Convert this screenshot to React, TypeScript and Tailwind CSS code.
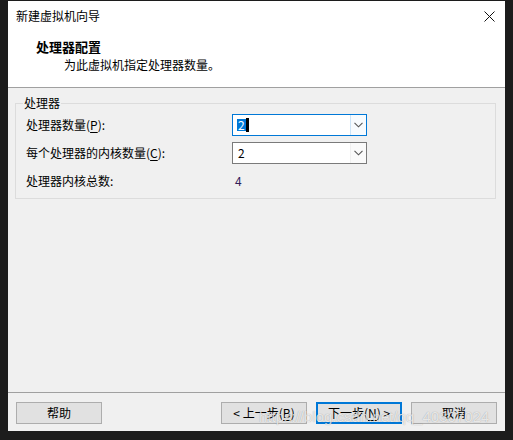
const font = "font-['Microsoft_YaHei','Noto_Sans_CJK_SC',sans-serif]";

const Accel = ({ ch }: { ch: string }) => (
  <>
    (<span className="underline underline-offset-2">{ch}</span>)
  </>
);

const Combo = ({ value, focused }: { value: string; focused?: boolean }) => (
  <div
    className={
      focused
        ? 'flex h-[22px] w-[135px] border border-[#0078d7] bg-white'
        : 'flex h-[22px] w-[135px] border border-[#7a7a7a] bg-white'
    }
  >
    <div className="flex flex-1 items-center pl-[4px] text-[12px] leading-none text-black">
      {focused ? (
        <>
          <span className="bg-[#0078d7] px-[1px] text-white">{value}</span>
          <span className="h-[14px] w-[3px] bg-black" />
        </>
      ) : (
        <span className="px-[1px]">{value}</span>
      )}
    </div>
    <div
      className={
        focused
          ? 'flex w-[16px] items-center justify-center border-l border-[#cce4f7] bg-[#f7fbfe]'
          : 'flex w-[16px] items-center justify-center border-l border-[#f0f0f0] bg-[#fafafa]'
      }
    >
      <svg width="9" height="6" viewBox="0 0 9 6" fill="none">
        <path d="M0.5 0.8 L4.5 4.8 L8.5 0.8" stroke="#555" strokeWidth="1.1" />
      </svg>
    </div>
  </div>
);

const WizButton = ({ children, primary }: { children: React.ReactNode; primary?: boolean }) => (
  <button
    type="button"
    className={
      primary
        ? 'flex h-[22px] w-[86px] items-center justify-center border-2 border-[#0078d7] bg-[#e1e1e1] text-[12px] text-black'
        : 'flex h-[22px] w-[86px] items-center justify-center border border-[#adadad] bg-[#e1e1e1] text-[12px] text-black'
    }
  >
    {children}
  </button>
);

export default function App() {
  return (
    <div className={`relative h-[440px] w-[513px] overflow-hidden bg-[#1c1c1c] pl-[8px] pt-[1px] ${font}`}>
      <div className="flex h-[430px] w-[497px] flex-col bg-[#f0f0f0]">
        {/* title bar */}
        <div className="flex h-[30px] items-center justify-between bg-white pl-[8px] pr-[10px]">
          <span className="text-[12px] text-black">新建虚拟机向导</span>
          <svg width="11" height="11" viewBox="0 0 11 11">
            <path d="M0.5 0.5 L10.5 10.5 M10.5 0.5 L0.5 10.5" stroke="#111" strokeWidth="1" />
          </svg>
        </div>

        {/* header */}
        <div className="flex h-[56px] flex-col bg-white pl-[28px] pt-[6px]">
          <span className="text-[13px] font-bold leading-[20px] text-black">处理器配置</span>
          <span className="pl-[28px] text-[12px] leading-[16px] text-black">为此虚拟机指定处理器数量。</span>
        </div>
        <div className="h-px bg-[#a0a0a0]" />

        {/* group */}
        <div className="relative ml-[7px] mr-[9px] mt-[15px] h-[96px] border border-[#dcdcdc] pl-[10px] pt-[10px]">
          <span className="absolute -top-[9px] left-[7px] bg-[#f0f0f0] px-[1px] text-[12px] leading-[16px] text-black">
            处理器
          </span>
          <div className="grid grid-cols-[206px_135px] gap-y-[6px] text-[12px] text-black">
            <div className="flex h-[22px] items-center">
              处理器数量<Accel ch="P" />:
            </div>
            <Combo value="2" focused />
            <div className="flex h-[22px] items-center">
              每个处理器的内核数量<Accel ch="C" />:
            </div>
            <Combo value="2" />
            <div className="flex h-[22px] items-center">处理器内核总数:</div>
            <div className="flex h-[22px] items-center pl-[3px] text-[#30205a]">4</div>
          </div>
        </div>

        <div className="flex-1" />

        {/* footer */}
        <div className="h-px bg-[#a0a0a0]" />
        <div className="flex h-[38px] items-start justify-between px-[8px] pt-[9px]">
          <WizButton>帮助</WizButton>
          <div className="flex gap-[9px]">
            <WizButton>
              &lt; 上一步<Accel ch="B" />
            </WizButton>
            <WizButton primary>
              下一步<Accel ch="N" /> &gt;
            </WizButton>
            <WizButton>取消</WizButton>
          </div>
        </div>
      </div>

      {/* watermark */}
      <span className="pointer-events-none absolute left-[259px] top-[407px] font-['Liberation_Sans',sans-serif] text-[15px] leading-[20px] text-white/75 [text-shadow:0_0_1px_rgba(0,0,0,0.35)]">
        https://blog.csdn.net/qq_40307024
      </span>
    </div>
  );
}
